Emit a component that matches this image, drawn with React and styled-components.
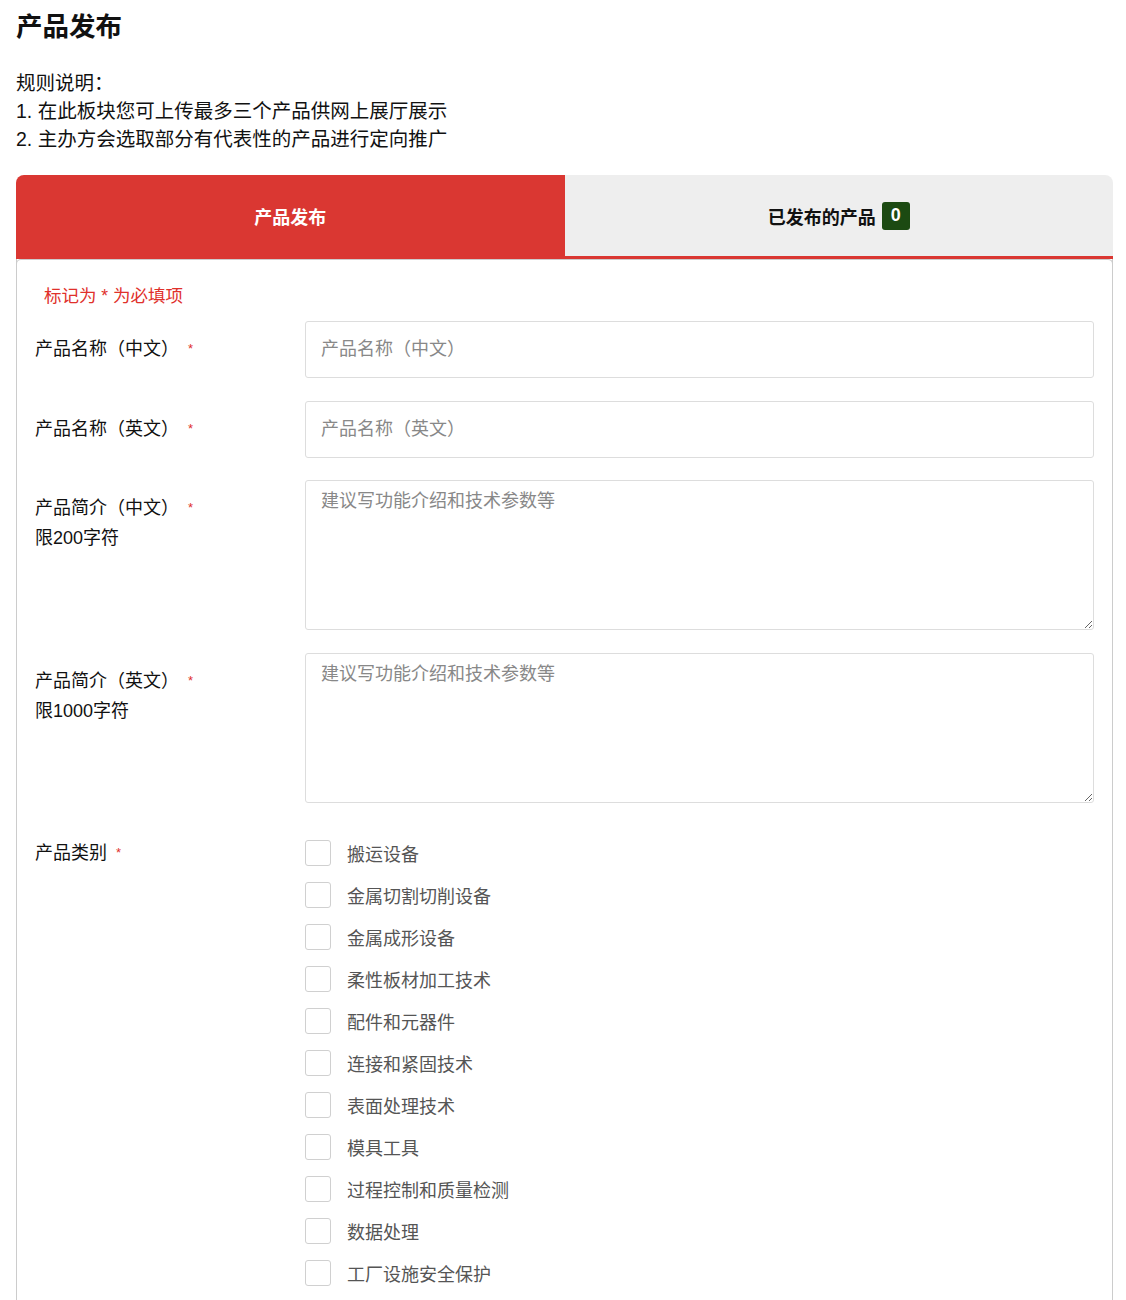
import React from "react";
import styled, { createGlobalStyle } from "styled-components";

const GlobalStyle = createGlobalStyle`
  body {
    margin: 0;
    background: #ffffff;
    font-family: "Liberation Sans", "Noto Sans CJK SC", sans-serif;
    color: #111;
  }
  * { box-sizing: border-box; }
`;

const Page = styled.div`
  padding: 10px 13px 0 16px;
  width: 1126px;
`;

const Title = styled.h1`
  margin: 0;
  font-size: 26.5px;
  line-height: 34px;
  font-weight: 700;
  color: #111;
`;

const Rules = styled.div`
  margin-top: 25px;
  font-size: 19.5px;
  line-height: 28px;
  color: #111;
  p { margin: 0; }
`;

const Tabs = styled.div`
  margin-top: 22px;
  display: flex;
  height: 84px;
`;

const Tab = styled.div`
  flex: 1;
  display: flex;
  align-items: center;
  justify-content: center;
  gap: 6px;
  font-size: 18px;
  font-weight: 700;
  color: ${(p) => (p.$active ? "#ffffff" : "#111")};
  background: ${(p) => (p.$active ? "#da3732" : "#eeeeee")};
  border-bottom: 3px solid #da3732;
  border-radius: ${(p) => (p.$active ? "8px 0 0 0" : "0 8px 0 0")};
`;

const Badge = styled.span`
  display: inline-flex;
  align-items: center;
  justify-content: center;
  width: 28px;
  height: 28px;
  border-radius: 3px;
  background: #1c4a12;
  color: #fff;
  font-size: 18px;
  font-weight: 700;
`;

const Panel = styled.div`
  border: 1px solid #cccccc;
  border-top: none;
  border-radius: 0 0 4px 4px;
  padding: 22px 18px 0 18px;
  position: relative;
  &::before {
    content: "";
    position: absolute;
    left: -1px;
    right: -1px;
    top: 0;
    height: 6px;
    border: 1px solid #cccccc;
    border-bottom: none;
    border-radius: 5px 5px 0 0;
  }
`;

const Note = styled.div`
  color: #e0302b;
  font-size: 17.5px;
  line-height: 30px;
  padding-left: 9px;
  margin-bottom: 10px;
`;

const Row = styled.div`
  display: flex;
  margin-bottom: ${(p) => p.$gap || 23}px;
`;

const Label = styled.div`
  width: 270px;
  flex-shrink: 0;
  padding-top: 13px;
  font-size: 18px;
  line-height: 30px;
  color: #111;
`;

const Star = styled.span`
  color: #e0302b;
  font-size: 13px;
  vertical-align: top;
  margin-left: 9px;
`;

const Field = styled.div`
  flex: 1;
`;

const Input = styled.input`
  width: 100%;
  height: 57px;
  border: 1px solid #dddddd;
  border-radius: 3px;
  padding: 0 15px;
  font-size: 18px;
  font-family: inherit;
  outline: none;
  &::placeholder { color: #888; }
`;

const TextArea = styled.textarea`
  display: block;
  width: 100%;
  height: 150px;
  border: 1px solid #dddddd;
  border-radius: 3px;
  padding: 8px 15px;
  font-size: 18px;
  line-height: 24px;
  font-family: inherit;
  outline: none;
  resize: vertical;
  &::placeholder { color: #888; }
`;

const Checks = styled.div`
  flex: 1;
  padding-top: 15px;
  display: flex;
  flex-direction: column;
  gap: 16px;
`;

const CheckItem = styled.label`
  display: flex;
  align-items: center;
  gap: 16px;
  height: 26px;
  font-size: 18px;
  color: #555;
`;

const Box = styled.span`
  width: 26px;
  height: 26px;
  border: 1px solid #d0d0d0;
  border-radius: 3px;
  background: #fff;
`;

const categories = [
  "搬运设备",
  "金属切割切削设备",
  "金属成形设备",
  "柔性板材加工技术",
  "配件和元器件",
  "连接和紧固技术",
  "表面处理技术",
  "模具工具",
  "过程控制和质量检测",
  "数据处理",
  "工厂设施安全保护",
];

export default function App() {
  return (
    <>
      <GlobalStyle />
      <Page>
        <Title>产品发布</Title>
        <Rules>
          <p>规则说明：</p>
          <p>1. 在此板块您可上传最多三个产品供网上展厅展示</p>
          <p>2. 主办方会选取部分有代表性的产品进行定向推广</p>
        </Rules>
        <Tabs>
          <Tab $active>产品发布</Tab>
          <Tab>
            已发布的产品 <Badge>0</Badge>
          </Tab>
        </Tabs>
        <Panel>
          <Note>标记为 * 为必填项</Note>
          <Row>
            <Label>
              产品名称（中文）<Star>*</Star>
            </Label>
            <Field>
              <Input placeholder="产品名称（中文）" />
            </Field>
          </Row>
          <Row $gap={22}>
            <Label>
              产品名称（英文）<Star>*</Star>
            </Label>
            <Field>
              <Input placeholder="产品名称（英文）" />
            </Field>
          </Row>
          <Row>
            <Label>
              产品简介（中文）<Star>*</Star>
              <br />
              限200字符
            </Label>
            <Field>
              <TextArea placeholder="建议写功能介绍和技术参数等" />
            </Field>
          </Row>
          <Row $gap={22}>
            <Label>
              产品简介（英文）<Star>*</Star>
              <br />
              限1000字符
            </Label>
            <Field>
              <TextArea placeholder="建议写功能介绍和技术参数等" />
            </Field>
          </Row>
          <Row>
            <Label>
              产品类别<Star>*</Star>
            </Label>
            <Checks>
              {categories.map((c) => (
                <CheckItem key={c}>
                  <Box />
                  {c}
                </CheckItem>
              ))}
            </Checks>
          </Row>
        </Panel>
      </Page>
    </>
  );
}
